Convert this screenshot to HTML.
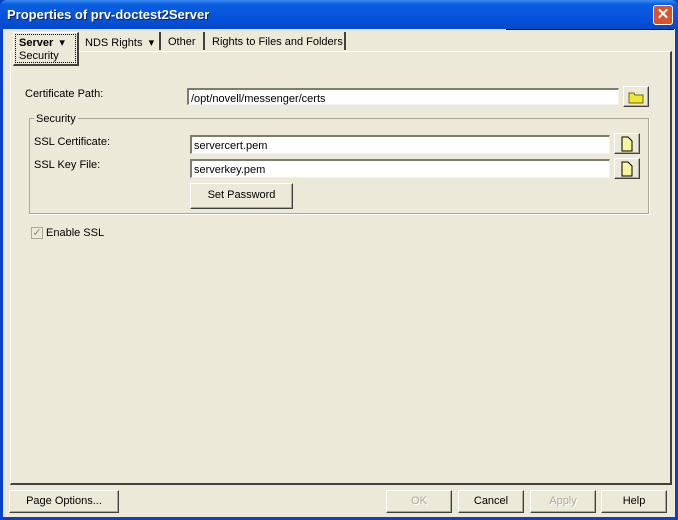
<!DOCTYPE html>
<html><head><style>
*{margin:0;padding:0;box-sizing:border-box}
body{width:678px;height:520px;overflow:hidden;font-family:"Liberation Sans",Arial,sans-serif;font-size:11px;color:#000;position:relative;background:#0842c8}
.win{position:absolute;left:3px;top:29px;width:672px;height:488px;background:#ece9d8}
.title{position:absolute;left:0;top:0;width:678px;height:29px;background:linear-gradient(#3d8cf5 0%,#0a5ee0 15%,#0653dc 60%,#0548c8 100%);border-radius:7px 7px 0 0}
.title span{position:absolute;left:7px;top:7px;color:#fff;font-weight:bold;font-size:13px;text-shadow:1px 1px #0a246a}
.close{position:absolute;left:653px;top:5px;width:20px;height:20px;background:#d9542b;border:1px solid #fff;border-radius:3px;color:#fff;font-weight:bold;text-align:center;line-height:17px;font-size:15px}
.a{position:absolute}
.panel{position:absolute;left:7px;top:22px;width:662px;height:434px;border-top:1px solid #fff;border-left:1px solid #fff;border-right:2px solid #404040;border-bottom:2px solid #404040}
.in{position:absolute;background:#fff;border-top:2px solid #7f7b72;border-left:2px solid #7f7b72;border-right:1px solid #f4f2ea;border-bottom:1px solid #f4f2ea;padding:3px 0 0 2px;font-size:11px}
.btn{position:absolute;border:1px solid;border-color:#fff #404040 #404040 #fff;box-shadow:inset -1px -1px #aca899;text-align:center;font-size:11px}
.dis{color:#aca899;text-shadow:1px 1px #fff}
.tab{position:absolute;top:3px;height:18px;font-size:11px;padding-top:4px;border-right:2px solid #404040}
</style></head><body>
<div class="title"><span>Properties of prv-doctest2Server</span><div class="close">✕</div></div>
<div class="win">
 <div class="a" style="left:503px;top:0;width:168px;height:1px;background:#000"></div>
 <div class="panel"></div>
 <div class="a" style="left:10px;top:3px;width:66px;height:34px;border:1px solid #fff;border-right:2px solid #404040;border-bottom:2px solid #404040;background:#ece9d8"></div>
 <div class="a" style="left:12px;top:5px;width:61px;height:29px;border:1px dotted #000;padding:2px 0 0 3px;line-height:13px"><b>Server</b> &nbsp;▾<br>Security</div>
 <div class="tab" style="left:78px;width:80px;padding-left:4px">NDS Rights &nbsp;▾</div>
 <div class="tab" style="left:160px;width:42px;padding-left:5px">Other</div>
 <div class="tab" style="left:204px;width:139px;padding-left:5px">Rights to Files and Folders</div>

 <div class="a" style="left:22px;top:59px">Certificate Path:</div>
 <div class="in" style="left:184px;top:59px;width:432px;height:17px">/opt/novell/messenger/certs</div>
 <div class="btn" style="left:620px;top:57px;width:26px;height:21px">
  <svg width="20" height="16" viewBox="0 0 20 16" style="margin-top:2px"><path d="M3 4h5l1 2h8v8H3z" fill="#f0e830" stroke="#6b6b00" stroke-width="1"/></svg></div>

 <div class="a" style="left:26px;top:89px;width:620px;height:96px;border:1px solid #aca899;box-shadow:1px 1px #fff"></div>
 <div class="a" style="left:31px;top:84px;background:#ece9d8;padding:0 2px">Security</div>
 <div class="a" style="left:31px;top:107px">SSL Certificate:</div>
 <div class="in" style="left:187px;top:106px;width:420px;height:19px">servercert.pem</div>
 <div class="btn" style="left:611px;top:104px;width:26px;height:21px"><svg width="14" height="16" viewBox="0 0 14 16" style="margin-top:2px"><path d="M2 1h6l4 4v10H2z" fill="#f8f4a0" stroke="#000"/></svg></div>
 <div class="a" style="left:31px;top:130px">SSL Key File:</div>
 <div class="in" style="left:187px;top:130px;width:420px;height:19px">serverkey.pem</div>
 <div class="btn" style="left:611px;top:129px;width:26px;height:21px"><svg width="14" height="16" viewBox="0 0 14 16" style="margin-top:2px"><path d="M2 1h6l4 4v10H2z" fill="#f8f4a0" stroke="#000"/></svg></div>
 <div class="btn" style="left:187px;top:154px;width:103px;height:26px;line-height:23px">Set Password</div>

 <div class="a" style="left:28px;top:198px;width:12px;height:12px;border:1px solid #aca899;background:#ece9d8;font-size:11px;line-height:10px;text-align:center;color:#888">✓</div>
 <div class="a" style="left:43px;top:198px">Enable SSL</div>

 <div class="btn" style="left:6px;top:461px;width:110px;height:23px;line-height:21px">Page Options...</div>
 <div class="btn dis" style="left:383px;top:461px;width:66px;height:23px;line-height:21px">OK</div>
 <div class="btn" style="left:455px;top:461px;width:66px;height:23px;line-height:21px">Cancel</div>
 <div class="btn dis" style="left:527px;top:461px;width:66px;height:23px;line-height:21px">Apply</div>
 <div class="btn" style="left:598px;top:461px;width:66px;height:23px;line-height:21px">Help</div>
</div>
</body></html>
